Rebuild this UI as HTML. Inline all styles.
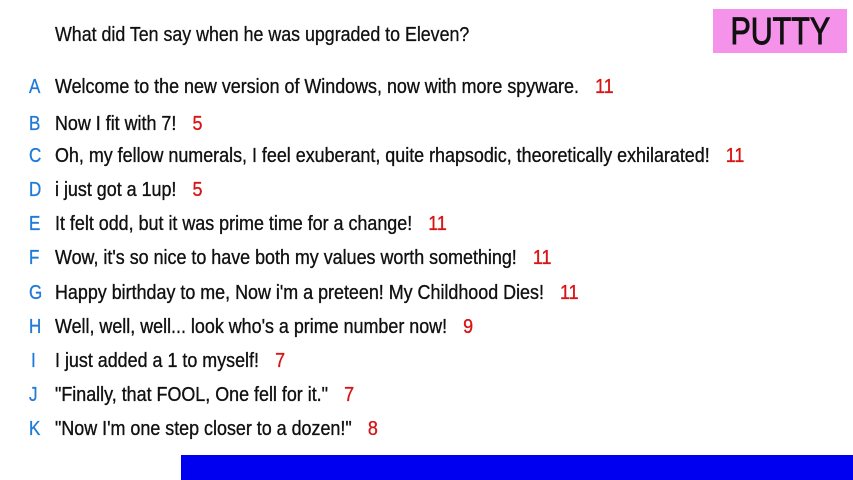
<!DOCTYPE html>
<html><head><style>
body{margin:0;width:853px;height:480px;background:#fff;position:relative;overflow:hidden;font-family:"Liberation Sans",sans-serif;}
.l{position:absolute;left:55px;height:30px;font-size:20px;line-height:30px;color:#111;white-space:nowrap;transform:scaleX(0.895);transform-origin:0 50%;-webkit-text-stroke:0.35px #111;}
.k{position:absolute;left:29px;height:30px;font-size:20px;line-height:30px;color:#1f7ad8;transform:scaleX(0.85);transform-origin:0 50%;-webkit-text-stroke:0.3px #1f7ad8;}
.l i{font-style:normal;color:#d81414;margin-left:18px;-webkit-text-stroke:0.35px #d81414;}
#q{position:absolute;left:55px;top:20px;font-size:20px;line-height:30px;color:#111;transform:scaleX(0.89);transform-origin:0 50%;white-space:nowrap;-webkit-text-stroke:0.3px #111;}
#p{position:absolute;left:713px;top:9px;width:134px;height:44px;background:#f592ea;color:#111;font-size:38px;line-height:46px;text-align:center;}
#p span{display:inline-block;transform:scaleX(0.8);-webkit-text-stroke:1px #111;}
#bar{position:absolute;left:181px;top:455px;width:672px;height:25px;background:#0000f0;}
</style></head><body>
<div id="q">What did Ten say when he was upgraded to Eleven?</div>
<div id="p"><span>PUTTY</span></div>
<div class="k" style="top:72px">A</div><div class="l" style="top:72px">Welcome to the new version of Windows, now with more spyware.<i>11</i></div>
<div class="k" style="top:109px">B</div><div class="l" style="top:109px">Now I fit with 7!<i>5</i></div>
<div class="k" style="top:141px">C</div><div class="l" style="top:141px">Oh, my fellow numerals, I feel exuberant, quite rhapsodic, theoretically exhilarated!<i>11</i></div>
<div class="k" style="top:175px">D</div><div class="l" style="top:175px">i just got a 1up!<i>5</i></div>
<div class="k" style="top:209px">E</div><div class="l" style="top:209px">It felt odd, but it was prime time for a change!<i>11</i></div>
<div class="k" style="top:243px">F</div><div class="l" style="top:243px">Wow, it's so nice to have both my values worth something!<i>11</i></div>
<div class="k" style="top:278px">G</div><div class="l" style="top:278px">Happy birthday to me, Now i'm a preteen! My Childhood Dies!<i>11</i></div>
<div class="k" style="top:312px">H</div><div class="l" style="top:312px">Well, well, well... look who's a prime number now!<i>9</i></div>
<div class="k" style="top:346px;left:31px">I</div><div class="l" style="top:346px">I just added a 1 to myself!<i>7</i></div>
<div class="k" style="top:380px">J</div><div class="l" style="top:380px">"Finally, that FOOL, One fell for it."<i>7</i></div>
<div class="k" style="top:414px">K</div><div class="l" style="top:414px">"Now I'm one step closer to a dozen!"<i>8</i></div>
<div id="bar"></div>
</body></html>
